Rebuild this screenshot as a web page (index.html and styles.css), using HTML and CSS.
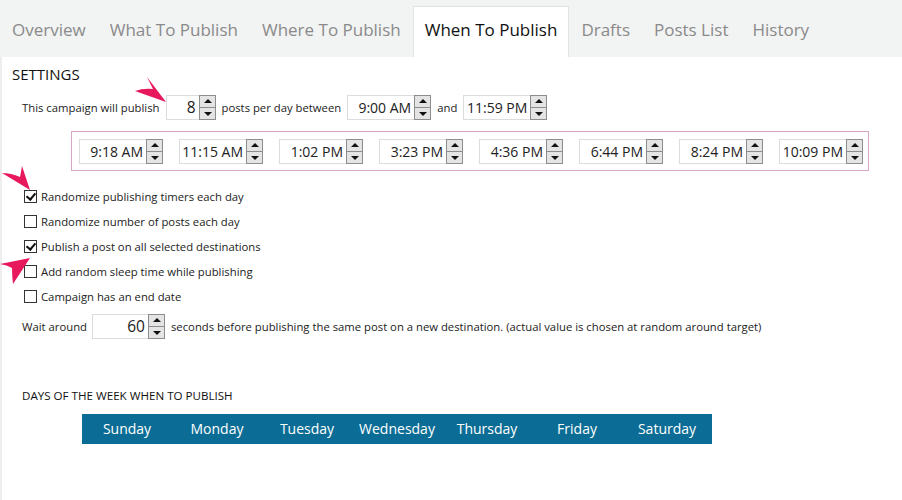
FILE: index.html
```html
<!DOCTYPE html>
<html lang="en">

<head>
    <meta charset="UTF-8">
    <meta name="viewport" content="width=device-width, initial-scale=1.0">
    <title>When To Publish</title>
    <link rel="stylesheet" href="styles.css">
</head>

<body>
    <ul class="tabs">
        <li class="tab">Overview</li>
        <li class="tab">What To Publish</li>
        <li class="tab">Where To Publish</li>
        <li class="tab active">When To Publish</li>
        <li class="tab">Drafts</li>
        <li class="tab">Posts List</li>
        <li class="tab">History</li>
    </ul>

    <div class="page">
        <h2 class="section-title">SETTINGS</h2>

        <div class="row publish-row">
            <span>This campaign will publish</span>
            <span class="spinbox num"><span class="field">8</span><span class="spin"><span class="up"></span><span class="down"></span></span></span>
            <span>posts per day between</span>
            <span class="spinbox time"><span class="field">9:00 AM</span><span class="spin"><span class="up"></span><span class="down"></span></span></span>
            <span>and</span>
            <span class="spinbox time"><span class="field">11:59 PM</span><span class="spin"><span class="up"></span><span class="down"></span></span></span>
        </div>

        <div class="timers">
            <span class="spinbox time"><span class="field">9:18 AM</span><span class="spin"><span class="up"></span><span class="down"></span></span></span>
            <span class="spinbox time"><span class="field">11:15 AM</span><span class="spin"><span class="up"></span><span class="down"></span></span></span>
            <span class="spinbox time"><span class="field">1:02 PM</span><span class="spin"><span class="up"></span><span class="down"></span></span></span>
            <span class="spinbox time"><span class="field">3:23 PM</span><span class="spin"><span class="up"></span><span class="down"></span></span></span>
            <span class="spinbox time"><span class="field">4:36 PM</span><span class="spin"><span class="up"></span><span class="down"></span></span></span>
            <span class="spinbox time"><span class="field">6:44 PM</span><span class="spin"><span class="up"></span><span class="down"></span></span></span>
            <span class="spinbox time"><span class="field">8:24 PM</span><span class="spin"><span class="up"></span><span class="down"></span></span></span>
            <span class="spinbox time"><span class="field">10:09 PM</span><span class="spin"><span class="up"></span><span class="down"></span></span></span>
        </div>

        <ul class="options">
            <li class="option"><span class="check checked"></span>Randomize publishing timers each day</li>
            <li class="option"><span class="check"></span>Randomize number of posts each day</li>
            <li class="option"><span class="check checked"></span>Publish a post on all selected destinations</li>
            <li class="option"><span class="check"></span>Add random sleep time while publishing</li>
            <li class="option"><span class="check"></span>Campaign has an end date</li>
        </ul>

        <div class="row wait-row">
            <span>Wait around</span>
            <span class="spinbox wait"><span class="field">60</span><span class="spin"><span class="up"></span><span class="down"></span></span></span>
            <span>seconds before publishing the same post on a new destination. (actual value is chosen at random around target)</span>
        </div>

        <h3 class="days-title">DAYS OF THE WEEK WHEN TO PUBLISH</h3>

        <div class="days">
            <span class="day">Sunday</span>
            <span class="day">Monday</span>
            <span class="day">Tuesday</span>
            <span class="day">Wednesday</span>
            <span class="day">Thursday</span>
            <span class="day">Friday</span>
            <span class="day">Saturday</span>
        </div>
    </div>

    <!-- annotation arrows drawn over the screenshot -->
    <svg class="arrows" width="902" height="500" viewBox="0 0 902 500">
        <path d="M166 102 L147 77 Q151 85 153 89 Q143 88 135 91 Z" fill="#e8185c" />
        <path d="M30 190 L22 166 Q21 172 20 177 Q11 173 2 173 Z" fill="#e8185c" />
        <path d="M30 258 L0 264 Q7 265 12 268 Q12 276 13 284 Z" fill="#e8185c" />
    </svg>
</body>

</html>
```

FILE: styles.css
```css
body {
    font-family: "Open Sans", "Noto Sans", sans-serif;
    background-color: #fff;
    color: #222;
    margin: 0;
    position: relative;
}

/* Tab strip */
.tabs {
    list-style: none;
    margin: 0;
    padding: 0;
    height: 57px;
    background: #f2f3f3;
    display: flex;
    align-items: flex-end;
}

.tab {
    height: 50px;
    padding: 0 11px;
    line-height: 45px;
    font-size: 17px;
    color: #8a8a8a;
    border: 1px solid transparent;
    border-bottom: none;
}

.tab.active {
    background: #fff;
    color: #111;
    border-color: #e2e2e2;
}

.page {
    border-left: 2px solid #eeeeee;
    height: 443px;
    box-sizing: border-box;
    padding: 8px 0 0 10px;
    font-size: 11.3px;
}

.section-title {
    margin: 0;
    font-size: 15px;
    font-weight: normal;
    line-height: 18px;
    color: #111;
}

.row {
    display: flex;
    align-items: center;
    gap: 6px;
}

.publish-row {
    margin: 12px 0 0 10px;
}

/* Spin boxes */
.spinbox {
    display: inline-flex;
    height: 25px;
}

.field {
    border: 1px solid #dcdcdc;
    border-right: none;
    box-sizing: border-box;
    height: 25px;
    line-height: 23px;
    text-align: right;
    padding-right: 3px;
    font-size: 14px;
    color: #222;
}

.num .field {
    width: 33px;
    font-size: 15.5px;
}

.time .field {
    width: 67px;
}

.wait .field {
    width: 56px;
    font-size: 15.5px;
}

.spin {
    width: 17px;
    height: 25px;
    display: flex;
    flex-direction: column;
}

.spin span {
    flex: 1;
    background: #e4e4e4;
    border: 1px solid #8d8d8d;
    position: relative;
}

.spin .down {
    border-top: none;
}

.spin span::after {
    content: "";
    position: absolute;
    left: 4px;
    top: 3px;
    border-left: 4px solid transparent;
    border-right: 4px solid transparent;
}

.spin .up::after {
    border-bottom: 4px solid #111;
}

.spin .down::after {
    top: 4px;
    border-top: 4px solid #111;
}

/* Generated timers */
.timers {
    margin: 11px 0 0 59px;
    width: 798px;
    height: 40px;
    box-sizing: border-box;
    border: 1px solid #d9a7c4;
    display: flex;
    align-items: center;
    gap: 16px;
    padding: 1px 0 0 7px;
}

/* Checkbox options */
.options {
    list-style: none;
    margin: 13px 0 0 12px;
    padding: 0;
}

.option {
    height: 25px;
    display: flex;
    align-items: center;
    gap: 4px;
}

.check {
    width: 13px;
    height: 13px;
    box-sizing: border-box;
    border: 1px solid #333;
    background: #fff;
    position: relative;
}

.check.checked::after {
    content: "";
    position: absolute;
    left: 3px;
    top: 0px;
    width: 4px;
    height: 7px;
    border: solid #111;
    border-width: 0 2px 2px 0;
    transform: rotate(40deg);
}

.wait-row {
    margin: 5px 0 0 10px;
}

.wait-row .spinbox {
    margin-left: -1px;
}

.days-title {
    margin: 49px 0 0 10px;
    font-size: 11.6px;
    font-weight: normal;
    line-height: 16px;
    color: #111;
}

.days {
    margin: 10px 0 0 70px;
    width: 630px;
    height: 30px;
    background: #0b6d95;
    display: flex;
}

.day {
    width: 90px;
    text-align: center;
    line-height: 30px;
    font-size: 14px;
    color: #fff;
}

.arrows {
    position: absolute;
    left: 0;
    top: 0;
    pointer-events: none;
}
```
